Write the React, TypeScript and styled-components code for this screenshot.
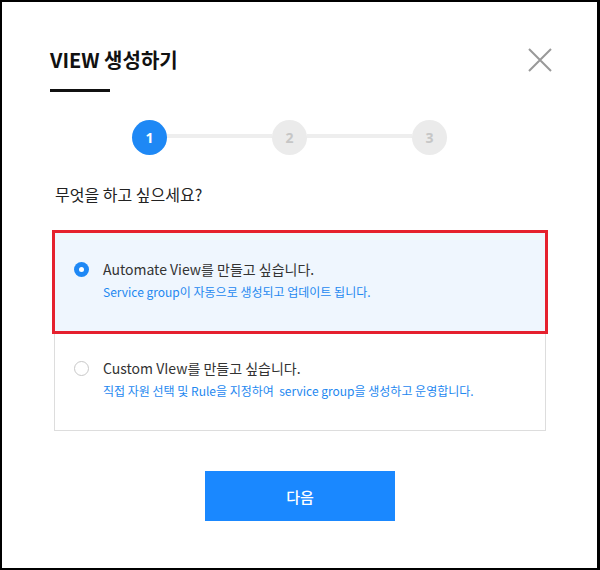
import React from "react";
import styled, { createGlobalStyle } from "styled-components";

const Global = createGlobalStyle`
  html, body { margin: 0; padding: 0; background: #fff; }
  body { font-family: "Noto Sans CJK KR", "Noto Sans", sans-serif; }
  * { box-sizing: border-box; }
`;

const Modal = styled.div`
  width: 600px;
  height: 570px;
  border: 2px solid #000;
  border-right-width: 3px;
  background: #fff;
  padding: 45px 45px 0 52px;
  display: flex;
  flex-direction: column;
`;

const Header = styled.div`
  display: flex;
  justify-content: space-between;
  align-items: flex-start;
`;

const TitleBlock = styled.div`
  display: flex;
  flex-direction: column;
  margin-left: -4px;
`;

const Title = styled.h1`
  margin: 0;
  font-size: 20px;
  line-height: 26px;
  font-weight: 700;
  color: #111;
`;

const TitleBar = styled.div`
  margin-top: 16px;
  width: 60px;
  height: 3px;
  background: #111;
`;

const CloseButton = styled.button`
  width: 24px;
  height: 24px;
  margin-top: 1px;
  padding: 0;
  border: 0;
  background: none;
  cursor: pointer;
  display: flex;
`;

const Stepper = styled.div`
  margin: 28px 0 0 78px;
  width: 315px;
  display: flex;
  align-items: center;
`;

const StepCircle = styled.div<{ $active?: boolean }>`
  width: 35px;
  height: 35px;
  border-radius: 50%;
  flex: none;
  display: flex;
  align-items: center;
  justify-content: center;
  background: ${(p) => (p.$active ? "#1e88f5" : "#ebebeb")};
  color: ${(p) => (p.$active ? "#fff" : "#c6c6c6")};
  font-family: "Open Sans", "Noto Sans", sans-serif;
  font-size: 14px;
  font-weight: 700;
`;

const StepLine = styled.div`
  flex: 1;
  height: 4px;
  background: #eeeeee;
  margin-top: -3px;
`;

const Question = styled.p`
  margin: 28px 0 0 1px;
  font-size: 16px;
  line-height: 23px;
  color: #222;
`;

const Options = styled.div`
  margin: 26px 0 0 0;
  width: 492px;
  display: flex;
  flex-direction: column;
`;

const OptionCard = styled.label<{ $selected?: boolean }>`
  position: relative;
  height: 100px;
  border: 1px solid #dddddd;
  background: ${(p) => (p.$selected ? "#eff6fe" : "#fff")};
  padding: 26px 0 0 19px;
  display: flex;
  gap: 14px;
  cursor: pointer;
  & + & { margin-top: -1px; }
  ${(p) =>
    p.$selected
      ? `outline: 3px solid #e5202e; outline-offset: -1px; z-index: 1;`
      : ""}
`;

const Radio = styled.span<{ $checked?: boolean }>`
  flex: none;
  width: 15px;
  height: 15px;
  margin-top: 3px;
  border-radius: 50%;
  border: ${(p) => (p.$checked ? "none" : "1px solid #c8c8c8")};
  background: ${(p) => (p.$checked ? "#1e88f5" : "#fff")};
  display: flex;
  align-items: center;
  justify-content: center;
  &::after {
    content: "";
    display: ${(p) => (p.$checked ? "block" : "none")};
    width: 5px;
    height: 5px;
    border-radius: 50%;
    background: #fff;
  }
`;

const OptionText = styled.div`
  display: flex;
  flex-direction: column;
`;

const OptionTitle = styled.span`
  font-size: 14px;
  line-height: 20px;
  color: #333;
`;

const OptionDesc = styled.span`
  margin-top: 4px;
  font-size: 12px;
  line-height: 18px;
  color: #1e88f0;
  white-space: pre;
`;

const Footer = styled.div`
  margin-top: 40px;
  width: 492px;
  display: flex;
  justify-content: center;
`;

const NextButton = styled.button`
  width: 190px;
  height: 50px;
  border: 0;
  background: #1a88ff;
  color: #fff;
  font-family: "Noto Sans CJK KR", sans-serif;
  font-size: 15px;
  font-weight: 500;
  cursor: pointer;
`;

export default function App() {
  return (
    <>
      <Global />
      <Modal>
        <Header>
          <TitleBlock>
            <Title>VIEW 생성하기</Title>
            <TitleBar />
          </TitleBlock>
          <CloseButton aria-label="닫기">
            <svg width="24" height="24" viewBox="0 0 24 24">
              <path d="M1 1 L23 23 M23 1 L1 23" stroke="#999" strokeWidth="2" fill="none" />
            </svg>
          </CloseButton>
        </Header>
        <Stepper>
          <StepCircle $active>1</StepCircle>
          <StepLine />
          <StepCircle>2</StepCircle>
          <StepLine />
          <StepCircle>3</StepCircle>
        </Stepper>
        <Question>무엇을 하고 싶으세요?</Question>
        <Options>
          <OptionCard $selected>
            <Radio $checked />
            <OptionText>
              <OptionTitle>Automate View를 만들고 싶습니다.</OptionTitle>
              <OptionDesc>Service group이 자동으로 생성되고 업데이트 됩니다.</OptionDesc>
            </OptionText>
          </OptionCard>
          <OptionCard>
            <Radio />
            <OptionText>
              <OptionTitle>Custom VIew를 만들고 싶습니다.</OptionTitle>
              <OptionDesc>{"직접 자원 선택 및 Rule을 지정하여  service group을 생성하고 운영합니다."}</OptionDesc>
            </OptionText>
          </OptionCard>
        </Options>
        <Footer>
          <NextButton>다음</NextButton>
        </Footer>
      </Modal>
    </>
  );
}
